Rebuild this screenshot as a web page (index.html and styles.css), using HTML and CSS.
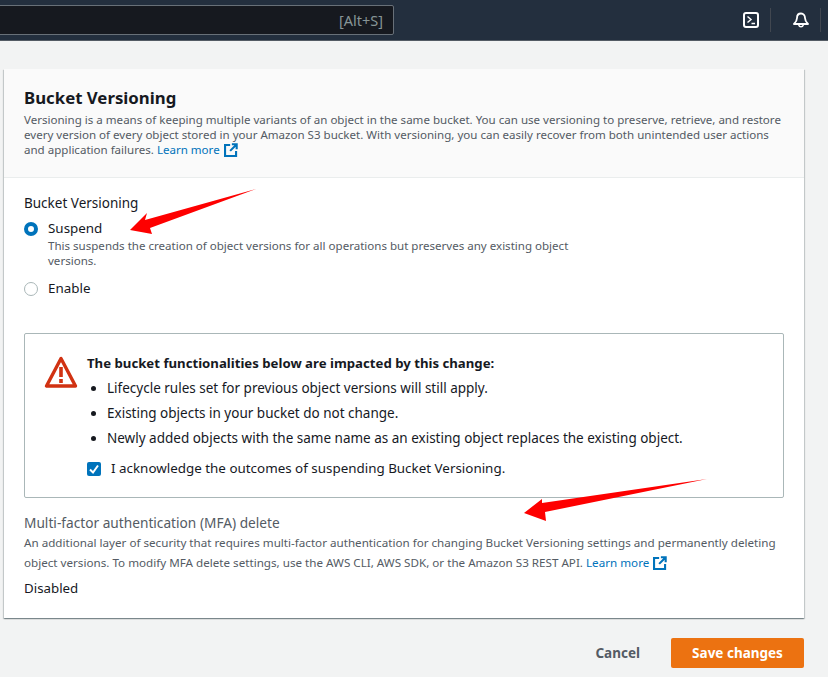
FILE: index.html
```html
<!DOCTYPE html>
<html lang="en">
<head>
<meta charset="utf-8">
<title>Bucket Versioning</title>
<link rel="stylesheet" href="styles.css">
</head>
<body>
<header class="topbar">
  <div class="search"><span class="hint">[Alt+S]</span></div>
  <div class="tool">
    <svg width="16" height="16" viewBox="0 0 16 16" fill="none" stroke="#fff" stroke-width="2"><rect x="1" y="1" width="14" height="14" rx="2"/><path d="M4.500 4.500 8 7.500l-3.500 3M8.500 11.500H12" stroke-width="1.500"/></svg>
  </div>
  <div class="tool">
    <svg width="16" height="17" viewBox="0 0 16 17" fill="none" stroke="#fff" stroke-width="1.800" stroke-linejoin="round"><path d="M8 1.500C5.500 1.500 4 3.500 4 6c0 3-1.500 4.500-3 6h14c-1.500-1.500-3-3-3-6 0-2.500-1.500-4.500-4-4.500Z"/><path d="M5.700 13a2.400 2.400 0 0 0 4.600 0" stroke-width="1.500"/></svg>
  </div>
</header>
<main class="page">
  <section class="card">
    <div class="card-head">
      <h2>Bucket Versioning</h2>
      <p class="desc">Versioning is a means of keeping multiple variants of an object in the same bucket. You can use versioning to preserve, retrieve, and restore every version of every object stored in your Amazon S3 bucket. With versioning, you can easily recover from both unintended user actions and application failures. <a class="link" href="#">Learn more <svg class="ext" width="14" height="14" viewBox="0 0 16 16" fill="none" stroke="#0073bb" stroke-width="2.400"><path d="M7 2.200H1.200v12.600h12.600V9M9 1.500h5.500V7M14 2 7 9"/></svg></a></p>
    </div>
    <div class="card-body">
      <div class="label">Bucket Versioning</div>
      <div class="radio-row"><span class="radio on"></span><span>Suspend</span></div>
      <p class="radio-desc">This suspends the creation of object versions for all operations but preserves any existing object versions.</p>
      <div class="radio-row second"><span class="radio"></span><span>Enable</span></div>
      <div class="alert">
        <svg class="warn" width="34" height="34" viewBox="0 0 34 34" fill="none"><path d="M17 3.500 2.500 31h29Z" stroke="#d13212" stroke-width="3.400" stroke-linejoin="round"/><path d="M17 12v10M17 24v4" stroke="#d13212" stroke-width="3.600"/></svg>
        <div class="alert-content">
          <div class="alert-title">The bucket functionalities below are impacted by this change:</div>
          <ul>
            <li>Lifecycle rules set for previous object versions will still apply.</li>
            <li>Existing objects in your bucket do not change.</li>
            <li>Newly added objects with the same name as an existing object replaces the existing object.</li>
          </ul>
          <div class="ack">
            <span class="check"><svg width="14" height="14" viewBox="0 0 14 14" fill="none" stroke="#fff" stroke-width="2"><path d="M3 7.500 6 10.500l5-7"/></svg></span>
            <span>I acknowledge the outcomes of suspending Bucket Versioning.</span>
          </div>
        </div>
      </div>
      <div class="mfa-label">Multi-factor authentication (MFA) delete</div>
      <p class="desc mfa">An additional layer of security that requires multi-factor authentication for changing Bucket Versioning settings and permanently deleting object versions. To modify MFA delete settings, use the AWS CLI, AWS SDK, or the Amazon S3 REST API. <a class="link" href="#">Learn more <svg class="ext" width="14" height="14" viewBox="0 0 16 16" fill="none" stroke="#0073bb" stroke-width="2.400"><path d="M7 2.200H1.200v12.600h12.600V9M9 1.500h5.500V7M14 2 7 9"/></svg></a></p>
      <div class="value">Disabled</div>
    </div>
  </section>
  <div class="actions">
    <button class="btn-link" type="button">Cancel</button>
    <button class="btn-primary" type="button">Save changes</button>
  </div>
</main>
<svg class="arrows" width="828" height="677" viewBox="0 0 828 677" fill="#fe0000">
  <path d="M256 189 145 220l2-7-17 17 22 4-2-6Z"/>
  <path d="M707 479 542 503l0-4-18 14 22 8-1-9Z"/>
</svg>
</body>
</html>
```

FILE: styles.css
```css
* { box-sizing: border-box; }
html, body { margin: 0; padding: 0; }
body {
  width: 828px;
  height: 677px;
  overflow: hidden;
  position: relative;
  background: #f2f3f3;
  color: #16191f;
  font-family: "Noto Sans", "Open Sans", sans-serif;
  font-size: 13.500px;
}
.topbar {
  height: 41px;
  background: #232f3e;
  border-bottom: 1px solid #545b64;
  display: flex;
  align-items: center;
  padding-right: 7px;
}
.search {
  width: 396px;
  height: 30px;
  margin-left: -2px;
  margin-right: auto;
  background: #16191f;
  border: 1px solid #687078;
  border-radius: 2px;
  display: flex;
  align-items: center;
  justify-content: flex-end;
  padding-right: 10px;
}
.hint { color: #879596; font-size: 14.500px; }
.tool {
  width: 50px;
  height: 24px;
  display: flex;
  align-items: center;
  justify-content: center;
  padding-left: 10px;
  border-right: 1px solid #414750;
}
.page { padding: 28px 24px 0 4px; }
.card {
  width: 800px;
  height: 549px;
  background: #fff;
  box-shadow: 0 1px 1px 0 rgba(0,28,36,.3), 1px 1px 1px 0 rgba(0,28,36,.15), -1px 1px 1px 0 rgba(0,28,36,.15);
}
.card-head {
  height: 109px;
  background: #fafafa;
  border-bottom: 1px solid #eaeded;
  padding: 17px 20px 0;
}
h2 {
  margin: 0 0 2px;
  font-size: 16.800px;
  line-height: 24px;
  font-weight: 700;
}
.desc {
  margin: 0;
  font-size: 11.550px;
  line-height: 15px;
  color: #545b64;
}
.link { color: #0073bb; text-decoration: none; }
.ext { vertical-align: -3px; margin-left: 1px; }
.card-body { padding: 16px 20px 0; }
.label { line-height: 19px; }
.radio-row {
  display: flex;
  align-items: center;
  gap: 10px;
  font-size: 13.400px;
  line-height: 19px;
  margin-top: 6px;
}
.radio-row.second { margin-top: 11px; }
.radio {
  width: 14px;
  height: 14px;
  border-radius: 50%;
  border: 1px solid #aab7b8;
  background: #fff;
}
.radio.on { border: 4px solid #0073bb; }
.radio-desc {
  margin: 0 0 0 24px;
  width: 540px;
  font-size: 11.550px;
  line-height: 15px;
  color: #545b64;
}
.alert {
  margin-top: 35px;
  width: 760px;
  height: 165px;
  border: 1px solid #aab7b8;
  border-radius: 2px;
  background: #fff;
  display: flex;
  padding: 20px 20px 0;
}
.warn { flex: none; margin: 1px 0 0 -1px; }
.alert-content { margin-left: 9px; }
.alert-title { font-size: 13.200px; line-height: 19px; font-weight: 700; margin-bottom: 6px; }
ul { margin: 0; padding: 0 0 0 20px; }
li { line-height: 19px; margin-bottom: 6px; }
.ack { display: flex; align-items: center; gap: 10px; font-size: 13.400px; line-height: 19px; margin-top: 11px; }
.check {
  width: 14px;
  height: 14px;
  border-radius: 2px;
  background: #0073bb;
  display: flex;
}
.mfa-label { margin-top: 15px; font-size: 13.700px; line-height: 19px; color: #545b64; }
.desc.mfa { font-size: 11.650px; line-height: 20px; margin-top: 1px; width: 760px; }
.value { font-size: 13.300px; line-height: 19px; margin-top: 6px; }
.actions {
  display: flex;
  justify-content: flex-end;
  align-items: center;
  width: 800px;
  margin-top: 20px;
  gap: 31px;
}
button { font-family: inherit; font-size: 13.500px; font-weight: 700; cursor: pointer; }
.btn-link { background: none; border: 0; color: #545b64; padding: 0; }
.btn-primary {
  width: 133px;
  height: 30px;
  background: #ec7211;
  color: #fff;
  border: 0;
  border-radius: 2px;
  padding: 0;
}
.arrows { position: absolute; left: 0; top: 0; pointer-events: none; }
```
